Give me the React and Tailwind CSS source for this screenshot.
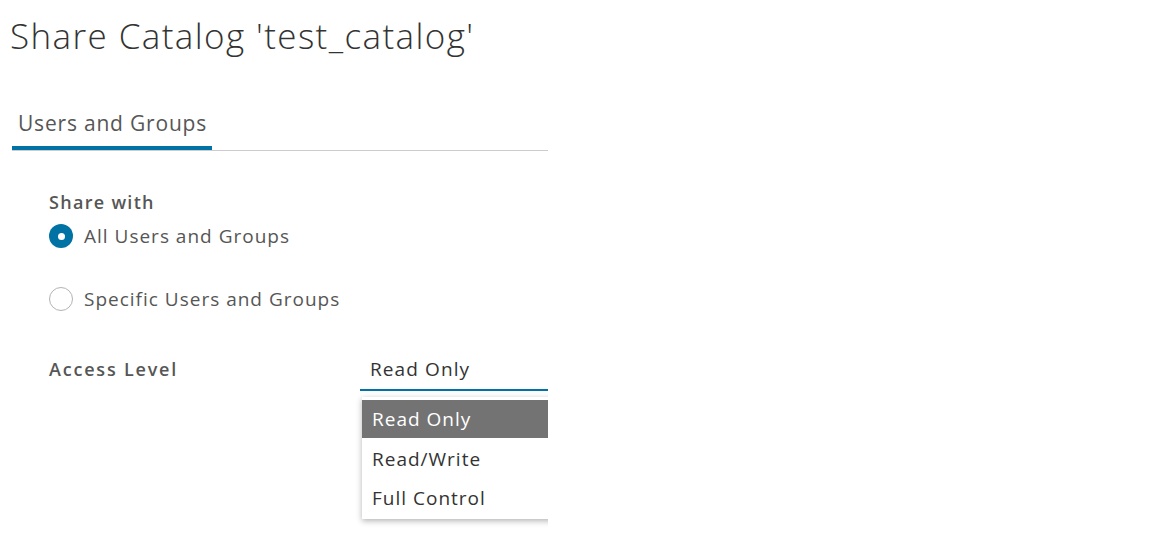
import React, { useState } from 'react';

const FONT = { fontFamily: '"Open Sans", "Liberation Sans", sans-serif' };

function Radio({ checked, label, onClick }) {
  return (
    <button type="button" onClick={onClick} className="flex items-center gap-[11px] text-left">
      {checked ? (
        <span className="flex h-6 w-6 items-center justify-center rounded-full bg-[#0072a3]">
          <span className="h-[7px] w-[7px] rounded-full bg-white" />
        </span>
      ) : (
        <span className="h-6 w-6 rounded-full border-[1.5px] border-[#b3b3b3] bg-white" />
      )}
      <span className="text-[19px] leading-6 tracking-[1px] text-[#565656]">{label}</span>
    </button>
  );
}

export default function App() {
  const [share, setShare] = useState('all');
  const [level, setLevel] = useState('Read Only');
  const options = ['Read Only', 'Read/Write', 'Full Control'];

  return (
    <div className="h-[547px] w-[1152px] bg-white" style={FONT}>
      <div className="relative h-full w-[548px] overflow-hidden">
        <h1 className="pl-[10px] pt-[12px] text-[35px] font-light leading-[48px] tracking-[1.4px] text-[#333]">
          Share Catalog 'test_catalog'
        </h1>

        <div className="mt-[48px] ml-[12px] flex border-b border-[#ccc]">
          <div className="border-b-4 border-[#0072a3] pl-[6px] pr-[5px] pb-[8px] text-[21px] leading-[30px] tracking-[0.8px] text-[#565656]">
            Users and Groups
          </div>
        </div>

        <div className="pl-[49px] pt-[39px]">
          <div className="text-[18px] font-semibold leading-6 tracking-[1.3px] text-[#565656]">Share with</div>
          <div className="mt-[10px]">
            <Radio checked={share === 'all'} label="All Users and Groups" onClick={() => setShare('all')} />
          </div>
          <div className="mt-[39px]">
            <Radio checked={share === 'specific'} label="Specific Users and Groups" onClick={() => setShare('specific')} />
          </div>

          <div className="mt-[46px] flex">
            <div className="w-[311px] text-[18px] font-semibold leading-6 tracking-[1.8px] text-[#565656]">Access Level</div>
            <div className="relative flex-1">
              <div className="border-b-2 border-[#0072a3] pl-[10px] pb-[8px] text-[19px] leading-6 tracking-[1.1px] text-[#333]">
                {level}
              </div>
              <div className="absolute left-[2px] top-[40px] w-[200px] bg-white py-[3px] shadow-[0_2px_6px_rgba(0,0,0,0.3)]">
                {options.map((o, i) => (
                  <div
                    key={o}
                    onClick={() => setLevel(o)}
                    className={
                      i === 0
                        ? 'h-[38px] bg-[#737373] pl-[10px] text-[19px] leading-[38px] tracking-[1px] text-white'
                        : 'h-[39px] pl-[10px] text-[19px] leading-[42px] tracking-[1px] text-[#333]'
                    }
                  >
                    {o}
                  </div>
                ))}
              </div>
            </div>
          </div>
        </div>
      </div>
    </div>
  );
}
